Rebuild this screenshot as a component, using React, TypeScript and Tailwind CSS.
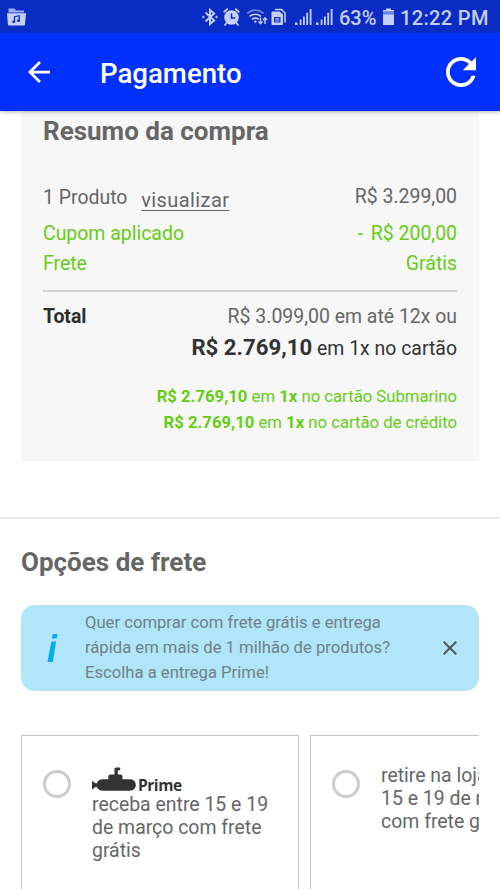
import type { ReactNode } from 'react';

interface SummaryRowProps {
  label: ReactNode;
  value: ReactNode;
  className?: string;
}

const FolderMusicIcon = () => (
  <svg className="w-[19px] h-[18px]" viewBox="0 0 19 18" fill="currentColor">
    <path d="M1.5 0.5h6l1.5 2h8v2H1.5z" opacity=".8" />
    <path d="M0 5.2h19L18 16.5q-.1 1-1.1 1H2q-1 0-1.1-1z" />
    <path d="M7.5 13.8V8.7l4.7-1v5" fill="none" stroke="#0a2bc4" strokeWidth={1.3} />
    <ellipse cx="6.7" cy="13.7" rx="1.5" ry="1.2" fill="#0a2bc4" />
    <ellipse cx="11.4" cy="12.7" rx="1.5" ry="1.2" fill="#0a2bc4" />
  </svg>
);

const BluetoothIcon = () => (
  <svg className="w-4 h-[18px]" viewBox="0 0 16 18" fill="none" stroke="currentColor" strokeWidth={2}>
    <path d="M3.5 4.5l8.6 8L8 16V2l4.1 3.5-8.6 8" />
    <circle cx="1.4" cy="9" r=".8" fill="currentColor" strokeWidth={1} />
    <circle cx="14.5" cy="9" r=".8" fill="currentColor" strokeWidth={1} />
  </svg>
);

const AlarmIcon = () => (
  <svg className="w-[17px] h-[18px]" viewBox="0 0 17 18">
    <g stroke="currentColor" strokeWidth={1.8} strokeLinecap="round">
      <path d="M1.2 3.7l3-2.5M15.8 3.7l-3-2.5M3.6 15l-1.6 1.8M13.4 15l1.6 1.8" />
    </g>
    <circle cx="8.5" cy="9.5" r="7.3" fill="currentColor" />
    <path d="M8.5 5.5v4.5h3.7" fill="none" stroke="#0a2bc4" strokeWidth={1.5} />
  </svg>
);

const WifiIcon = () => (
  <svg className="w-[22px] h-[18px]" viewBox="0 0 22 18" fill="none" stroke="currentColor" strokeWidth={1.7}>
    <path d="M1 5.3Q9.3-1.2 17.6 5.3" opacity=".55" />
    <path d="M3.5 8.4q5.8-4.3 11.6 0M6 11.3q3.3-2.3 6.6 0" />
    <circle cx="9.3" cy="13.6" r="1.2" fill="currentColor" stroke="none" />
    <path d="M14.5 9.5v6M12.4 13.4l2.1 2.4 2.1-2.4M19 16v-6M17 12l2-2.3 2 2.3" strokeWidth={1.4} />
  </svg>
);

const SimIcon = () => (
  <svg className="w-[15px] h-[18px]" viewBox="0 0 15 18">
    <path d="M4 1.6h6.5L14 5v9.5" fill="none" stroke="currentColor" strokeWidth={1.5} />
    <path fillRule="evenodd" fill="currentColor" d="M1.5 3.5h7l3.5 3V16q0 1-1 1H1.5q-1 0-1-1V4.5q0-1 1-1zM3 9v5.5h6.500V9z" />
    <path d="M4.2 10.3h4.1v1.2H4.2zM4.2 12.4h4.1v1H4.2z" fill="currentColor" />
  </svg>
);

const SignalIcon = () => (
  <svg className="w-[17px] h-[18px]" viewBox="0 0 17 18" fill="currentColor">
    <path d="M0 14.5h2.5V17H0zM4.7 11.5h1.8V17H4.7zM8 8.5h1.8V17H8zM11.3 4.8h1.8V17h-1.8zM14.7 1h1.8v16h-1.8z" />
  </svg>
);

const BatteryIcon = () => (
  <svg className="w-[11px] h-[18px]" viewBox="0 0 11 18" fill="currentColor">
    <path d="M3 0.5h5V2H3zM0 2h11v1.2H0z" />
    <path d="M0 3h11v4H0z" opacity=".5" />
    <path d="M0 6.5h11V17H0z" />
  </svg>
);

const SubmarineIcon = () => (
  <svg className="w-11 h-6" viewBox="0 0 44 24" fill="#333">
    <path d="M0 14q1.500 0 2 1.500l2.500 1C5.800 13.500 8 12.300 11 12.300h5.300V9.600q0-2 2-2h4.200V2q0-1.500 1.500-1.500h4.200v2.800h-2.400v4.300h2.700q2 0 2 2v2.700h7q6.300 0 6.300 5.700T37.500 23.700H11c-3 0-5.200-1.400-6.500-4L2 20.800Q1.500 22.500 0 22.500z" />
  </svg>
);

const StatusBar = () => (
  <div className="flex h-[33px] items-center bg-[#0a2bc4] pl-[7px] text-[#c5cffb]">
    <FolderMusicIcon />
    <div className="ml-[176px] flex items-center">
      <BluetoothIcon />
      <span className="ml-[5px]"><AlarmIcon /></span>
      <span className="ml-[6px]"><WifiIcon /></span>
      <span className="ml-[3px]"><SimIcon /></span>
      <span className="ml-[9px]"><SignalIcon /></span>
      <span className="ml-1"><SignalIcon /></span>
    </div>
    <span className="ml-[6px] mt-[2px] w-[39px] whitespace-nowrap text-[20px] font-medium">63%</span>
    <span className="ml-[5px]"><BatteryIcon /></span>
    <span className="ml-[6px] mt-[2px] whitespace-nowrap text-[20px] font-medium tracking-[0.35px]">12:22 PM</span>
  </div>
);

const AppBar = () => (
  <header className="relative z-10 shadow-[0_1px_4px_rgba(0,0,0,0.3)]">
    <StatusBar />
    <div className="flex h-[78px] items-center bg-[#0231ff] pl-[28px] pr-[24px] text-white">
      <button className="h-[22px] w-[22px]" aria-label="Voltar">
        <svg className="h-[22px] w-[22px]" viewBox="4 4 16 16" fill="currentColor">
          <path d="M20 11H7.83l5.59-5.59L12 4l-8 8 8 8 1.41-1.41L7.83 13H20v-2z" />
        </svg>
      </button>
      <h1 className="ml-[50px] mt-[3px] flex-1 text-[27.6px] font-medium leading-8">Pagamento</h1>
      <button className="h-[30px] w-[30px]" aria-label="Recarregar">
        <svg className="h-[30px] w-[30px]" viewBox="4 4 16 16" fill="currentColor">
          <path d="M17.65 6.35C16.2 4.9 14.21 4 12 4c-4.42 0-7.99 3.58-7.99 8s3.57 8 7.99 8c3.73 0 6.84-2.55 7.73-6h-2.08c-.82 2.33-3.04 4-5.65 4-3.31 0-6-2.69-6-6s2.69-6 6-6c1.66 0 3.14.69 4.22 1.78L13 11h7V4l-2.35 2.35z" />
        </svg>
      </button>
    </div>
  </header>
);

const SummaryRow = ({ label, value, className = '' }: SummaryRowProps) => (
  <div className={`flex justify-between whitespace-nowrap ${className}`}>
    <span>{label}</span>
    <span>{value}</span>
  </div>
);

const OrderSummary = () => (
  <section className="mx-[21px] h-[350px] bg-[#f7f7f7] px-[22px] pt-[5px] text-[19.45px] leading-[30px] text-[#666]">
    <h2 className="text-[26px] font-bold leading-[30px]">Resumo da compra</h2>
    <SummaryRow
      className="mt-[36px]"
      label={<>1 Produto <a className="relative top-[3px] ml-[9px] text-[20px] tracking-[0.4px] underline decoration-1 underline-offset-[3px]">visualizar</a></>}
      value="R$ 3.299,00"
    />
    <SummaryRow
      className="mt-[6px] text-[#66cc14]"
      label="Cupom aplicado"
      value={<><span className="mr-[3px]">-</span> R$ 200,00</>}
    />
    <SummaryRow className="text-[#66cc14]" label="Frete" value="Grátis" />
    <div className="mt-[11px] border-t-2 border-[#d4d4d4]" />
    <SummaryRow
      className="mt-[10px]"
      label={<b className="text-[#2d2d2d]">Total</b>}
      value="R$ 3.099,00 em até 12x ou"
    />
    <p className="whitespace-nowrap text-right leading-[31px] text-[#333]">
      <b className="text-[22.2px]">R$ 2.769,10</b> em 1x no cartão
    </p>
    <div className="mt-[20px] whitespace-nowrap text-right text-[16.7px] leading-[26px] text-[#66cc14]">
      <p><b>R$ 2.769,10</b> em <b>1x</b> no cartão Submarino</p>
      <p><b>R$ 2.769,10</b> em <b>1x</b> no cartão de crédito</p>
    </div>
  </section>
);

const PrimeBanner = () => (
  <div className="mt-[27px] flex h-[86px] items-center rounded-[14px] bg-[#b1e6fa] pl-[26px] pr-[22px]">
    <svg className="h-7 w-[11px]" viewBox="0 0 11 28" fill="#05aeea">
      <path d="M5.7 0h4.8l-.8 4.5H4.9zM4.3 7.5h4.8L5.9 28H.5z" />
    </svg>
    <p className="-mt-[2px] ml-[27px] flex-1 whitespace-nowrap text-[16.65px] leading-[25px] text-[#6f7f86]">
      Quer comprar com frete grátis e entrega<br />
      rápida em mais de 1 milhão de produtos?<br />
      Escolha a entrega Prime!
    </p>
    <button className="-mt-px h-[14px] w-[14px]" aria-label="Fechar">
      <svg className="h-[14px] w-[14px]" viewBox="0 0 14 14" stroke="#555" strokeWidth={2}>
        <path d="M.7 .7l12.6 12.6M13.3 .7L.7 13.3" />
      </svg>
    </button>
  </div>
);

const ShippingCard = ({ children }: { children: ReactNode }) => (
  <div className="flex h-[200px] w-[278px] shrink-0 border border-[#c6c6c6] pl-[21px] pt-[28px]">
    <span className="mt-[6px] h-7 w-7 shrink-0 rounded-full border-[3px] border-[#ccc]" />
    <div className="ml-[21px] whitespace-nowrap text-[19.45px] leading-[23px] text-[#666]">{children}</div>
  </div>
);

const ShippingOptions = () => (
  <section className="mt-[56px] border-t-2 border-[#e8e8e8] px-[21px] pt-[27px]">
    <h2 className="text-[26px] font-bold leading-[32px] text-[#666]">Opções de frete</h2>
    <PrimeBanner />
    <div className="mt-[44px] flex gap-[11px] overflow-hidden">
      <ShippingCard>
        <div className="mt-[2px] flex h-[27px] items-end pb-[2px]">
          <SubmarineIcon />
          <b className="relative top-[3px] ml-[2px] font-['Open_Sans'] text-[15.5px] leading-[18px] tracking-[-0.45px] text-[#333]">Prime</b>
        </div>
        receba entre 15 e 19<br />
        de março com frete<br />
        grátis
      </ShippingCard>
      <ShippingCard>
        retire na loja entre<br />
        15 e 19 de março<br />
        com frete grátis
      </ShippingCard>
    </div>
  </section>
);

const App = () => {
  return (
    <div className="h-[889px] w-[500px] overflow-hidden bg-white font-['Roboto',sans-serif]">
      <AppBar />
      <OrderSummary />
      <ShippingOptions />
    </div>
  );
};

export default App;
